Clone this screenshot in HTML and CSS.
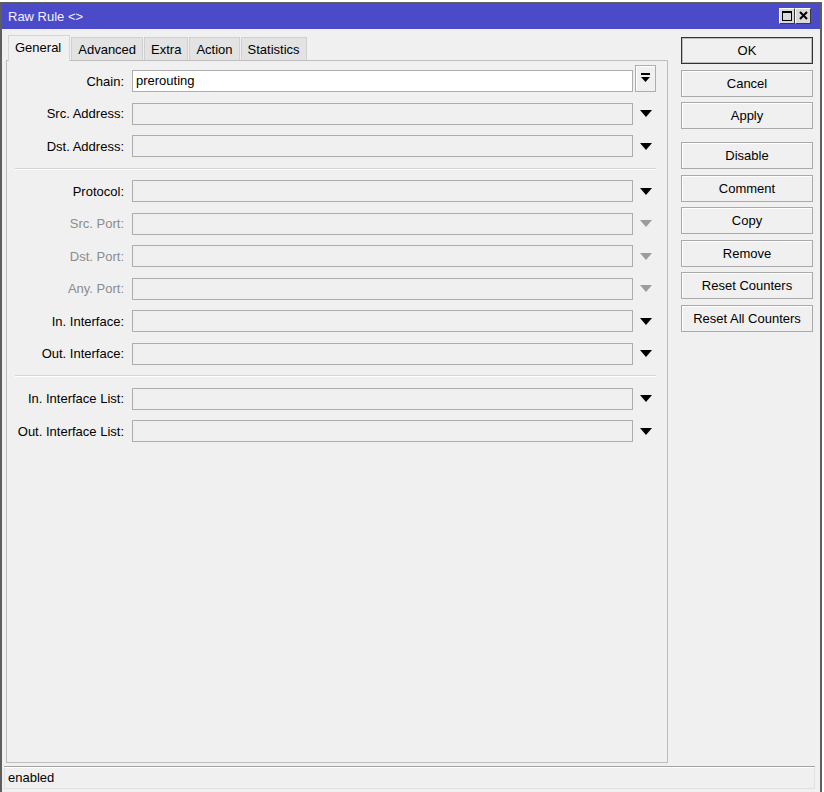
FILE: index.html
```html
<!DOCTYPE html>
<html>
<head>
<meta charset="utf-8">
<title>Raw Rule</title>
<link rel="stylesheet" href="styles.css">
</head>
<body>
<div class="window">
  <div class="titlebar">
    <span class="title">Raw Rule &lt;&gt;</span>
    <div class="wbtns">
      <span class="wbtn"><svg width="10" height="10" viewBox="0 0 10 10"><rect x="0.5" y="0.5" width="9" height="9" fill="none" stroke="#000" stroke-width="1"/><rect x="0" y="0" width="10" height="2" fill="#000"/></svg></span>
      <span class="wbtn"><svg width="9" height="9" viewBox="0 0 9 9"><path d="M1 1 L8 8 M8 1 L1 8" stroke="#000" stroke-width="2" fill="none"/></svg></span>
    </div>
  </div>
  <div class="client">
    <div class="main">
      <div class="tabs">
        <span class="tab active">General</span>
        <span class="tab">Advanced</span>
        <span class="tab">Extra</span>
        <span class="tab">Action</span>
        <span class="tab">Statistics</span>
      </div>
      <div class="panel">
        <div class="row">
          <span class="label">Chain:</span>
          <span class="field white">prerouting</span>
          <span class="dd btn"><svg width="9" height="10" viewBox="0 0 9 10"><rect x="0" y="0" width="9" height="2" fill="#000"/><polygon points="0,4 9,4 4.5,9" fill="#000"/></svg></span>
        </div>
        <div class="row">
          <span class="label">Src. Address:</span>
          <span class="field"></span>
          <span class="dd"><svg class="tri" width="12" height="7" viewBox="0 0 12 7"><polygon points="0,0 12,0 6,7"/></svg></span>
        </div>
        <div class="row">
          <span class="label">Dst. Address:</span>
          <span class="field"></span>
          <span class="dd"><svg class="tri" width="12" height="7" viewBox="0 0 12 7"><polygon points="0,0 12,0 6,7"/></svg></span>
        </div>
        <div class="sep"></div>
        <div class="row">
          <span class="label">Protocol:</span>
          <span class="field"></span>
          <span class="dd"><svg class="tri" width="12" height="7" viewBox="0 0 12 7"><polygon points="0,0 12,0 6,7"/></svg></span>
        </div>
        <div class="row">
          <span class="label disabled">Src. Port:</span>
          <span class="field"></span>
          <span class="dd"><svg class="tri off" width="12" height="7" viewBox="0 0 12 7"><polygon points="0,0 12,0 6,7"/></svg></span>
        </div>
        <div class="row">
          <span class="label disabled">Dst. Port:</span>
          <span class="field"></span>
          <span class="dd"><svg class="tri off" width="12" height="7" viewBox="0 0 12 7"><polygon points="0,0 12,0 6,7"/></svg></span>
        </div>
        <div class="row">
          <span class="label disabled">Any. Port:</span>
          <span class="field"></span>
          <span class="dd"><svg class="tri off" width="12" height="7" viewBox="0 0 12 7"><polygon points="0,0 12,0 6,7"/></svg></span>
        </div>
        <div class="row">
          <span class="label">In. Interface:</span>
          <span class="field"></span>
          <span class="dd"><svg class="tri" width="12" height="7" viewBox="0 0 12 7"><polygon points="0,0 12,0 6,7"/></svg></span>
        </div>
        <div class="row">
          <span class="label">Out. Interface:</span>
          <span class="field"></span>
          <span class="dd"><svg class="tri" width="12" height="7" viewBox="0 0 12 7"><polygon points="0,0 12,0 6,7"/></svg></span>
        </div>
        <div class="sep"></div>
        <div class="row">
          <span class="label">In. Interface List:</span>
          <span class="field"></span>
          <span class="dd"><svg class="tri" width="12" height="7" viewBox="0 0 12 7"><polygon points="0,0 12,0 6,7"/></svg></span>
        </div>
        <div class="row">
          <span class="label">Out. Interface List:</span>
          <span class="field"></span>
          <span class="dd"><svg class="tri" width="12" height="7" viewBox="0 0 12 7"><polygon points="0,0 12,0 6,7"/></svg></span>
        </div>
      </div>
    </div>
    <div class="side">
      <span class="btn ok">OK</span>
      <span class="btn">Cancel</span>
      <span class="btn group-end">Apply</span>
      <span class="btn">Disable</span>
      <span class="btn">Comment</span>
      <span class="btn">Copy</span>
      <span class="btn">Remove</span>
      <span class="btn">Reset Counters</span>
      <span class="btn">Reset All Counters</span>
    </div>
  </div>
  <div class="status">
    <div class="statusbox">enabled</div>
  </div>
</div>
</body>
</html>
```

FILE: styles.css
```css
* { box-sizing: border-box; }
html, body { margin: 0; padding: 0; }
body {
  background: #ffffff;
  width: 824px;
  height: 792px;
  overflow: hidden;
  font-family: "Liberation Sans", Arial, sans-serif;
  font-size: 13px;
  color: #000;
}
.window {
  width: 822px;
  height: 800px;
  margin-top: 2px;
  border: 2px solid #5e5e5e;
  border-top-width: 1px;
  background: #f0f0f0;
}
.titlebar {
  height: 26px;
  background: #4b4bc9;
  display: flex;
  align-items: center;
  padding: 0 9px 0 6px;
}
.title {
  color: #f2f2ff;
  font-size: 13px;
}
.wbtns {
  margin-left: auto;
  display: flex;
  margin-top: -1px;
}
.wbtn {
  width: 16px;
  height: 16px;
  background: #d9d9d9;
  border: 1px solid;
  border-color: #ffffff #3a3a3a #3a3a3a #ffffff;
  display: flex;
  align-items: center;
  justify-content: center;
}
.client {
  display: flex;
  padding: 6px 0 0 4px;
}
.main {
  width: 662px;
  display: flex;
  flex-direction: column;
}
.tabs {
  display: flex;
  align-items: flex-end;
  height: 25px;
  padding-left: 2px;
}
.tab {
  height: 23px;
  padding: 0 6px;
  border: 1px solid #d0d0d0;
  border-bottom: none;
  background: #e3e3e3;
  display: flex;
  align-items: center;
  white-space: nowrap;
  margin-right: 1px;
}
.tab.active {
  height: 26px;
  margin-bottom: -1px;
  background: #f0f0f0;
  border-color: #d6d6d6;
  position: relative;
  z-index: 1;
  padding-bottom: 2px;
  padding-left: 6px;
  padding-right: 8px;
}
.panel {
  height: 703px;
  border: 1px solid #bdbdbd;
  background: #f0f0f0;
  padding-top: 9px;
}
.row {
  display: flex;
  align-items: center;
  height: 22px;
  margin-bottom: 10.5px;
}
.label {
  width: 117px;
  margin-right: 8px;
  text-align: right;
  white-space: nowrap;
}
.label.disabled { color: #8c8c8c; }
.field {
  width: 501px;
  height: 22px;
  border: 1px solid #adadad;
  background: #f0f0f0;
}
.field.white {
  background: #ffffff;
  padding-left: 3px;
  line-height: 20px;
}
.dd {
  width: 21px;
  height: 22px;
  margin-left: 2px;
  display: flex;
  align-items: center;
  justify-content: center;
}
.dd.btn {
  border: 1px solid #adadad;
  background: #f0f0f0;
}
.tri { fill: #000; }
.tri.off { fill: #9c9c9c; }
.sep {
  height: 2px;
  margin: 0 11px 10.5px 8px;
  border-top: 1px solid #d6d6d6;
  border-bottom: 1px solid #ffffff;
}
.side {
  width: 132px;
  margin-left: 13px;
  margin-top: 2px;
  display: flex;
  flex-direction: column;
}
.btn {
  height: 27px;
  margin-bottom: 5.5px;
  border: 1px solid #a9a9a9;
  background: #f0f0f0;
  box-shadow: inset 1px 1px 0 #ffffff;
  display: flex;
  align-items: center;
  justify-content: center;
  white-space: nowrap;
}
.btn.ok {
  border-color: #333333;
  box-shadow: inset 0 0 0 1px #bdbdbd;
}
.btn.group-end { margin-bottom: 13px; }
.status {
  margin: 3px 5px 0 2px;
  border-top: 1px solid #a3a3a3;
}
.statusbox {
  height: 22px;
  border: 1px solid #e2e2e2;
  border-top-color: #ffffff;
  padding-left: 3px;
  line-height: 20px;
  background: #f0f0f0;
}
```
